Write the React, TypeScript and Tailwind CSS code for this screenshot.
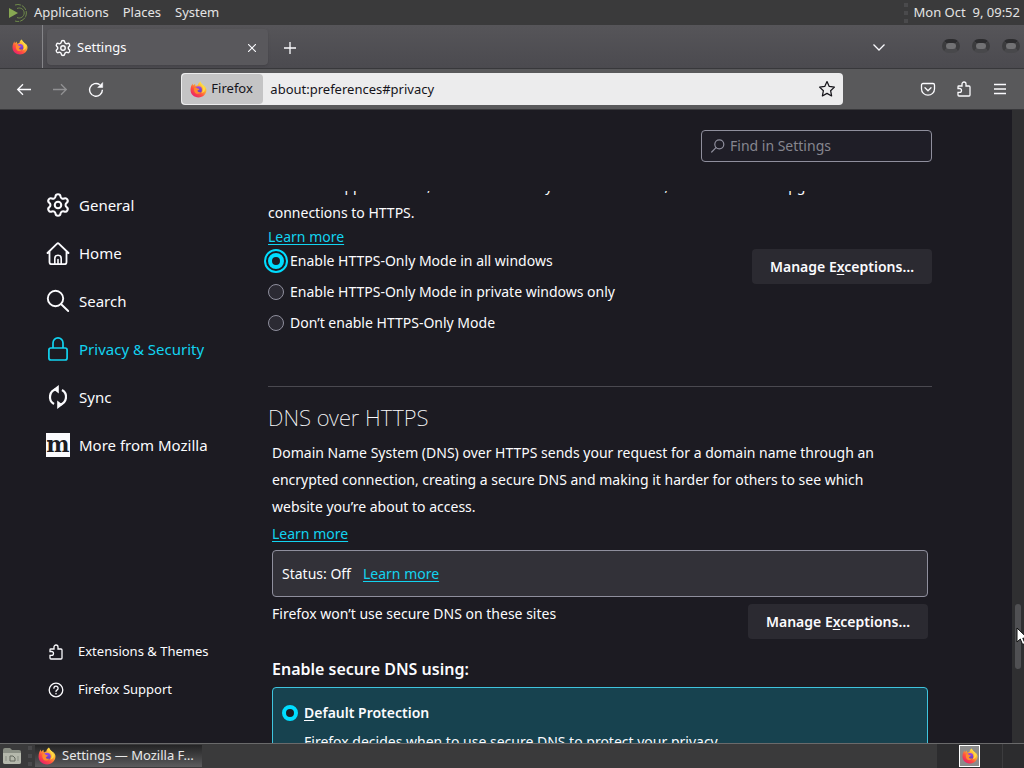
import React from "react";
import { Settings } from "lucide-react";

interface IconProps {
  className?: string;
}

interface NavItem {
  label: string;
  href: string;
  icon: React.ReactNode;
  active?: boolean;
}

function FirefoxLogo({ className }: IconProps) {
  return (
    <svg viewBox="0 0 32 32" className={className} aria-hidden="true">
      <defs>
        <linearGradient id="fx-body" x1="0.85" y1="0.1" x2="0.2" y2="0.95">
          <stop offset="0" stopColor="#fff04a" />
          <stop offset="0.35" stopColor="#ffab2e" />
          <stop offset="0.65" stopColor="#ff5040" />
          <stop offset="1" stopColor="#e8206a" />
        </linearGradient>
        <linearGradient id="fx-globe" x1="0.5" y1="0" x2="0.5" y2="1">
          <stop offset="0" stopColor="#a04ae8" />
          <stop offset="1" stopColor="#5b3bb8" />
        </linearGradient>
      </defs>
      <path
        d="M30 13c-.8-2-2.400-4-3.700-4.700 1 2 1.500 3.800 1.500 4C25.800 7.500 20.500 6 19.500 1c-3.500 2-4.500 5.500-4.600 7-1.500.1-3 .7-4.200 1.600C9.700 8 9.700 6 10 5 8 6 6.500 7.500 5.600 8.500c-.5-1-.5-3-.3-4C2.500 7 1 12 1 17c0 8 6.500 14 15 14s15-6.500 15-14c0-1.500-.3-2.800-1-4z"
        fill="url(#fx-body)"
      />
      <circle cx="16" cy="16.500" r="6.500" fill="url(#fx-globe)" />
      <path
        d="M8 13c2-1.500 5-1 6 1 1.500 0 3.500.2 3.500 1.500-.4 1.200-3 1.500-3.500 3 .5 2.500 4 3.500 6.500 1.500-1.500 4.500-7 5.500-10.500 2.500C8 20.500 7 16 8 13z"
        fill="#ff8a2c"
      />
      <path
        d="M19.500 1c-1 5 4 7 5 13 .6 3-1 7-3.500 8.500 5-.5 8-4 7.500-9C27.500 8 21 7 19.500 1z"
        fill="#ffd944"
      />
    </svg>
  );
}

function DistroLogo({ className }: IconProps) {
  return (
    <svg viewBox="0 0 20 20" className={className} fill="none" aria-hidden="true">
      <path d="M1 5l9 5-9 5z" fill="#87a752" />
      <path d="M7 2a8.500 8.500 0 1 1 0 16" stroke="#6f8a4a" strokeDasharray="6 1" />
      <path d="M9 5.500a5 5 0 1 1 0 9" stroke="#6f8a4a" />
    </svg>
  );
}

function PuzzleIcon({ className }: IconProps) {
  return (
    <svg viewBox="0 0 16 16" className={className} fill="none" stroke="currentColor" strokeWidth="1.3" aria-hidden="true">
      <path d="M2 7.500V5.800a.8.800 0 0 1 .8-.8H6V3a2 2 0 0 1 4 0v2h3a1 1 0 0 1 1 1v8a1 1 0 0 1-1 1H3a1 1 0 0 1-1-1v-2.700h1.600a1.900 1.900 0 0 0 0-3.800z" />
    </svg>
  );
}

function HomeIcon() {
  return (
    <svg viewBox="0 0 24 24" className="size-6" fill="none" stroke="currentColor" strokeWidth="1.800" strokeLinecap="round" strokeLinejoin="round" aria-hidden="true">
      <path d="M1.500 12l9.600-9.400a1.200 1.200 0 0 1 1.700 0L22.500 12M3.500 10.500v10.700a2 2 0 0 0 2 2h13a2 2 0 0 0 2-2V10.500" />
      <path d="M8.800 23v-5.500a3.200 3.200 0 0 1 6.400 0V23M12 23v-4.500" strokeWidth="1.600" />
    </svg>
  );
}

function SearchIcon() {
  return (
    <svg viewBox="0 0 24 24" className="size-6" fill="none" stroke="currentColor" strokeWidth="1.900" strokeLinecap="round" aria-hidden="true">
      <circle cx="9.500" cy="9.500" r="7.700" />
      <path d="M15.200 15.200l7 6.800" />
    </svg>
  );
}

function LockIcon() {
  return (
    <svg viewBox="0 0 24 24" className="size-6" fill="none" stroke="currentColor" strokeWidth="1.700" aria-hidden="true">
      <rect x="2.900" y="11" width="18.200" height="12" rx="2" />
      <path d="M7 11V5.900a5 5 0 0 1 10 0V11" />
    </svg>
  );
}

function SyncIcon() {
  return (
    <svg viewBox="0 0 24 24" className="size-6" fill="none" stroke="currentColor" strokeWidth="2.200" aria-hidden="true">
      <path d="M8 19A8 8 0 0 1 10.500 4.200M16 5a8 8 0 0 1-2.500 14.800" />
      <path d="M12.800 0v8.600L7.300 4.300zM11.200 24v-8.600l5.500 4.300z" fill="currentColor" stroke="none" />
    </svg>
  );
}

function MozillaIcon() {
  return (
    <span className="flex size-6 items-center justify-center bg-[#fbfbfe] pb-0.5 font-['DejaVu_Serif',serif] text-[22px] leading-[18px] font-bold text-[#1c1b22]">
      m
    </span>
  );
}

const navItems: NavItem[] = [
  { label: "General", href: "#general", icon: <Settings className="size-[26px] -mx-px" strokeWidth={1.900} /> },
  { label: "Home", href: "#home", icon: <HomeIcon /> },
  { label: "Search", href: "#search", icon: <SearchIcon /> },
  { label: "Privacy & Security", href: "#privacy", icon: <LockIcon />, active: true },
  { label: "Sync", href: "#sync", icon: <SyncIcon /> },
  { label: "More from Mozilla", href: "#moreFromMozilla", icon: <MozillaIcon /> },
];

const httpsModes = [
  "Enable HTTPS-Only Mode in all windows",
  "Enable HTTPS-Only Mode in private windows only",
  "Don’t enable HTTPS-Only Mode",
];

function Grip() {
  return (
    <span className="flex flex-col gap-1">
      <span className="size-1 bg-[#4a4a4c]" />
      <span className="size-1 bg-[#4a4a4c]" />
      <span className="size-1 bg-[#4a4a4c]" />
    </span>
  );
}

function DesktopPanel() {
  return (
    <header className="flex h-[25px] shrink-0 items-center bg-[#3a3a3b] pr-1 text-[13px] text-[#e4e4e4]">
      <DistroLogo className="ml-2 size-5" />
      <nav className="ml-1.5 flex gap-3.5">
        <button type="button">Applications</button>
        <button type="button">Places</button>
        <button type="button">System</button>
      </nav>
      <div className="ml-auto flex items-center gap-1.5">
        <Grip />
        <time className="whitespace-pre">Mon Oct  9, 09:52</time>
      </div>
    </header>
  );
}

function WindowButton({ label }: { label: string }) {
  return (
    <button
      type="button"
      aria-label={label}
      className="h-3.5 w-[18px] rounded-full border-4 border-[#3c3c3e] border-t-[#2c2c2e] border-b-[#48484b] bg-[#727274]"
    />
  );
}

function TabBar() {
  return (
    <div className="flex h-11 shrink-0 items-center border-b border-[#38383b] bg-linear-to-b from-[#565559] to-[#4b4a4f]">
      <div className="flex h-full w-[43px] items-center justify-center border-r border-[#858589] pr-0.5">
        <FirefoxLogo className="size-4" />
      </div>
      <div className="ml-1 flex h-9 w-[221px] items-center rounded-sm bg-[#59585c] px-2 pt-0.5 text-[#fbfbfe] shadow-sm">
        <Settings className="size-[18px] -mx-px" strokeWidth={1.900} />
        <span className="ml-1.5 text-[13px]">Settings</span>
        <button type="button" aria-label="Close tab" className="ml-auto p-1">
          <svg viewBox="0 0 8 8" className="size-2" stroke="currentColor" strokeWidth="1.100">
            <path d="M0 0l8 8M8 0L0 8" />
          </svg>
        </button>
      </div>
      <button type="button" aria-label="New tab" className="ml-4 pt-0.5 text-[#fbfbfe]">
        <svg viewBox="0 0 12 12" className="size-3" stroke="currentColor" strokeWidth="1.300">
          <path d="M6 0v12M0 6h12" />
        </svg>
      </button>
      <button type="button" aria-label="List all tabs" className="mr-14 ml-auto text-[#fbfbfe]">
        <svg viewBox="0 0 14 8" className="h-2 w-3.5" fill="none" stroke="currentColor" strokeWidth="1.300">
          <path d="M1.500 1.500L7 7l5.500-5.500" />
        </svg>
      </button>
      <div className="mr-1 flex gap-3 pb-0.5">
        <WindowButton label="Minimize" />
        <WindowButton label="Maximize" />
        <WindowButton label="Close" />
      </div>
    </div>
  );
}

function Toolbar() {
  return (
    <div className="flex h-[41px] shrink-0 items-center border-b border-[#38383b] bg-[#59595b] px-4 text-[#fbfbfe]">
      <div className="flex flex-1 items-center gap-5">
        <button type="button" aria-label="Back">
          <svg viewBox="0 0 16 16" className="size-4" fill="none" stroke="currentColor" strokeWidth="1.300">
            <path d="M15 8.500H1.700M7 3.200L1.700 8.500 7 13.800" />
          </svg>
        </button>
        <button type="button" aria-label="Forward" disabled className="text-[#919193]">
          <svg viewBox="0 0 16 16" className="size-4" fill="none" stroke="currentColor" strokeWidth="1.300">
            <path d="M1 8.500h13.300M9 3.200l5.300 5.300L9 13.800" />
          </svg>
        </button>
        <button type="button" aria-label="Reload">
          <svg viewBox="0 0 16 16" className="size-4" fill="none" stroke="currentColor" strokeWidth="1.400">
            <path d="M14.400 8.800A6.400 6.400 0 1 1 11.800 3.700" />
            <path d="M14.700 1.500v5H9.700z" fill="currentColor" strokeWidth=".5" />
          </svg>
        </button>
      </div>
      <div className="flex h-8 w-2/3 items-center rounded-sm bg-[#ececed] p-px text-[#15141a]">
        <span className="flex h-full w-[81px] shrink-0 items-center gap-1 rounded-sm bg-[#c4c4c5] pl-2 text-[13px]">
          <FirefoxLogo className="size-[17px]" />
          Firefox
        </span>
        <input
          aria-label="Address"
          defaultValue="about:preferences#privacy"
          className="min-w-0 flex-1 bg-transparent px-[7px] pt-px text-[13px] outline-none"
        />
        <button type="button" aria-label="Bookmark this page" className="mr-1.5">
          <svg viewBox="0 0 16 16" className="size-[18px]" fill="none" stroke="currentColor" strokeWidth="1.100" strokeLinejoin="round">
            <path d="M8 1.400l2 4.300 4.600.6-3.400 3.200.9 4.700L8 11.900l-4.100 2.300.9-4.700L1.400 6.300 6 5.700z" />
          </svg>
        </button>
      </div>
      <div className="flex flex-1 items-center justify-end gap-5">
        <button type="button" aria-label="Save to Pocket">
          <svg viewBox="0 0 16 16" className="size-4" fill="none" stroke="currentColor" strokeWidth="1.300" strokeLinecap="round" strokeLinejoin="round">
            <path d="M3 2.500h10A1.500 1.500 0 0 1 14.500 4v4a6.500 6.200 0 0 1-13 0V4A1.500 1.500 0 0 1 3 2.500z" />
            <path d="M5 6.800l3 2.900 3-2.900" />
          </svg>
        </button>
        <button type="button" aria-label="Extensions">
          <PuzzleIcon className="size-4" />
        </button>
        <button type="button" aria-label="Open application menu">
          <svg viewBox="0 0 16 16" className="size-4" stroke="currentColor" strokeWidth="1.300">
            <path d="M2 3.500h12M2 8h12M2 12.500h12" />
          </svg>
        </button>
      </div>
    </div>
  );
}

function Sidebar() {
  return (
    <aside className="flex w-[264px] shrink-0 flex-col justify-between pt-[71px] pb-[34px] pl-[46px]">
      <nav>
        {navItems.map((item) => (
          <a
            key={item.label}
            href={item.href}
            className={`flex h-12 items-center gap-[9px] text-[15px] ${item.active ? "text-[#12d3f0]" : "text-[#fbfbfe]"}`}
          >
            {item.icon}
            {item.label}
          </a>
        ))}
      </nav>
      <nav className="text-[13px]">
        <a href="#addons" className="flex h-[38px] items-center gap-3.5 pl-0.5">
          <PuzzleIcon className="size-4" />
          Extensions & Themes
        </a>
        <a href="#support" className="flex h-[38px] items-center gap-3.5 pl-0.5">
          <svg viewBox="0 0 16 16" className="size-4" fill="none" stroke="currentColor" strokeWidth="1.300" strokeLinecap="round">
            <circle cx="8" cy="8" r="6.800" />
            <path d="M5.900 6.200a2.100 2.100 0 1 1 3.300 1.700C8.400 8.400 8 8.800 8 9.500" />
            <path d="M8 11.700v.1" strokeWidth="1.600" />
          </svg>
          Firefox Support
        </a>
      </nav>
    </aside>
  );
}

function ExceptionsButton() {
  return (
    <button type="button" className="h-[35px] w-[180px] shrink-0 rounded-sm bg-[#2b2a31] text-sm font-semibold">
      Manage E<span className="underline underline-offset-2">x</span>ceptions…
    </button>
  );
}

function LearnMore() {
  return (
    <a href="#learn-more" className="text-[#12d3f0] underline underline-offset-2">
      Learn more
    </a>
  );
}

function Preferences() {
  return (
    <main className="flex max-w-[672px] min-w-0 flex-1 flex-col">
      <div className="flex h-[81px] shrink-0 justify-end px-1 pt-5">
        <label className="flex h-8 w-[231px] items-center gap-1 rounded-sm border border-[#8f8f9d] bg-[#1f1e27] px-2">
          <svg viewBox="0 0 16 16" className="size-4 text-[#8f8f9d]" fill="none" stroke="currentColor" strokeWidth="1.200" strokeLinecap="round">
            <circle cx="9.300" cy="6.300" r="4.500" />
            <path d="M6 9.700l-4.300 4.300" />
          </svg>
          <input
            type="search"
            aria-label="Find in Settings"
            placeholder="Find in Settings"
            className="min-w-0 flex-1 bg-transparent text-sm outline-none placeholder:text-[#86868f]"
          />
        </label>
      </div>
      <div className="min-h-0 flex-1 overflow-hidden px-1 text-sm">
        <section className="-mt-[19px] border-b border-[#4a4950] pb-[51px]">
          <p className="leading-[27px]">
            websites support HTTPS, and if HTTPS-Only Mode is enabled, then Firefox will upgrade all
            <br />
            connections to HTTPS.
          </p>
          <div className="leading-[22px]">
            <LearnMore />
          </div>
          <div className="flex items-start justify-between">
            <fieldset className="flex flex-col gap-[7px] pt-px">
              {httpsModes.map((mode, index) => (
                <label key={mode} className="flex h-6 items-center gap-1.5">
                  <input
                    type="radio"
                    name="https-mode"
                    defaultChecked={index === 0}
                    className="size-4 appearance-none rounded-full border border-[#8f8f9d] bg-[#2b2a33] checked:border-4 checked:border-[#00ddff] checked:bg-[#1c1b22] checked:outline-2 checked:outline-offset-2 checked:outline-[#00ddff]"
                  />
                  {mode}
                </label>
              ))}
            </fieldset>
            <div className="pt-px">
              <ExceptionsButton />
            </div>
          </div>
        </section>

        <section>
          <h2 className="pt-3.5 text-[22px] leading-8 font-extralight">DNS over HTTPS</h2>
          <div className="px-1 pt-1.5">
            <p className="pr-12 leading-[27px]">
              Domain Name System (DNS) over HTTPS sends your request for a domain name through an
              encrypted connection, creating a secure DNS and making it harder for others to see which
              website you’re about to access.
            </p>
            <div className="leading-[27px]">
              <LearnMore />
            </div>
            <div className="mt-[3px] flex h-[47px] items-center gap-3 rounded-sm border border-[#8f8f9d] bg-[#323138] px-[9px]">
              <span>Status: Off</span>
              <LearnMore />
            </div>
            <div className="flex items-start justify-between pt-[7px]">
              <span>Firefox won’t use secure DNS on these sites</span>
              <ExceptionsButton />
            </div>
            <h3 className="pt-[18px] text-base leading-6 font-semibold">Enable secure DNS using:</h3>
            <div className="mt-1.5 rounded-sm border border-[#3fc4de] bg-[#17424f] px-[9px] pt-[13px] pb-4">
              <label className="flex h-6 items-center gap-1.5 font-semibold">
                <input
                  type="radio"
                  name="doh-mode"
                  defaultChecked
                  className="size-4 appearance-none rounded-full border border-[#8f8f9d] checked:border-4 checked:border-[#00ddff] checked:bg-[#1c1b22]"
                />
                <span>
                  <span className="underline underline-offset-2">D</span>efault Protection
                </span>
              </label>
              <p className="pt-[3px] pl-[22px] leading-[27px]">
                Firefox decides when to use secure DNS to protect your privacy.
              </p>
            </div>
          </div>
        </section>
      </div>
    </main>
  );
}

function Scrollbar() {
  return (
    <div className="relative ml-auto flex w-3 shrink-0 flex-col items-center bg-[#2f2f31]">
      <div className="grow-[494]" />
      <div className="w-1.5 grow-[65] rounded-full bg-[#505053]" />
      <div className="grow-[74]" />
      {/* mouse pointer resting on the thumb */}
      <svg viewBox="0 0 12 19" className="absolute top-[517px] left-1 h-[19px] w-3" aria-hidden="true">
        <path d="M1 1v14l3.300-3 2.300 5.500 2.500-1-2.300-5.300H11.500z" fill="#fff" stroke="#111" />
      </svg>
    </div>
  );
}

function Taskbar() {
  return (
    <footer className="flex h-[25px] shrink-0 items-center border-t border-[#6a6a6b] bg-[#3a3a3b] text-[13px] text-[#e8e8e8]">
      <button type="button" aria-label="Show files" className="ml-0.5">
        <svg viewBox="0 0 20 18" className="h-[18px] w-5">
          <path d="M1 3a2 2 0 0 1 2-2h5l2 2h7a2 2 0 0 1 2 2v10a2 2 0 0 1-2 2H3a2 2 0 0 1-2-2z" fill="#8b8f85" />
          <path d="M1 6h18v9a2 2 0 0 1-2 2H3a2 2 0 0 1-2-2z" fill="#b5b8ac" />
          <path d="M8 9h3l2 2v3H8z" fill="none" stroke="#62665d" />
          <path d="M4 9v5M16 9v5" stroke="#8b8f85" />
        </svg>
      </button>
      <span className="ml-1.5">
        <Grip />
      </span>
      <button
        type="button"
        className="ml-[3px] flex h-[22px] w-[167px] items-center gap-1.5 bg-linear-to-b from-[#242425] to-[#5c5c5e] pl-[3px] text-left"
      >
        <FirefoxLogo className="size-[18px] shrink-0" />
        <span>Settings — Mozilla F…</span>
      </button>
      <div className="ml-auto flex h-full w-[87px] items-center bg-[#2c2c2e]">
        <button
          type="button"
          aria-label="Workspace 1"
          className="ml-[22px] flex h-[22px] w-[21px] items-center justify-center border border-white bg-[#8b8b8b]"
        >
          <FirefoxLogo className="size-4" />
        </button>
        <span className="ml-[22px] h-full w-px bg-[#3c3c3e]" />
      </div>
    </footer>
  );
}

export default function App() {
  return (
    <div className="flex h-screen flex-col overflow-hidden bg-[#1c1b22] font-['Noto_Sans',sans-serif] text-[#fbfbfe]">
      <DesktopPanel />
      <TabBar />
      <Toolbar />
      <div className="flex min-h-0 flex-1">
        <Sidebar />
        <Preferences />
        <Scrollbar />
      </div>
      <Taskbar />
    </div>
  );
}
